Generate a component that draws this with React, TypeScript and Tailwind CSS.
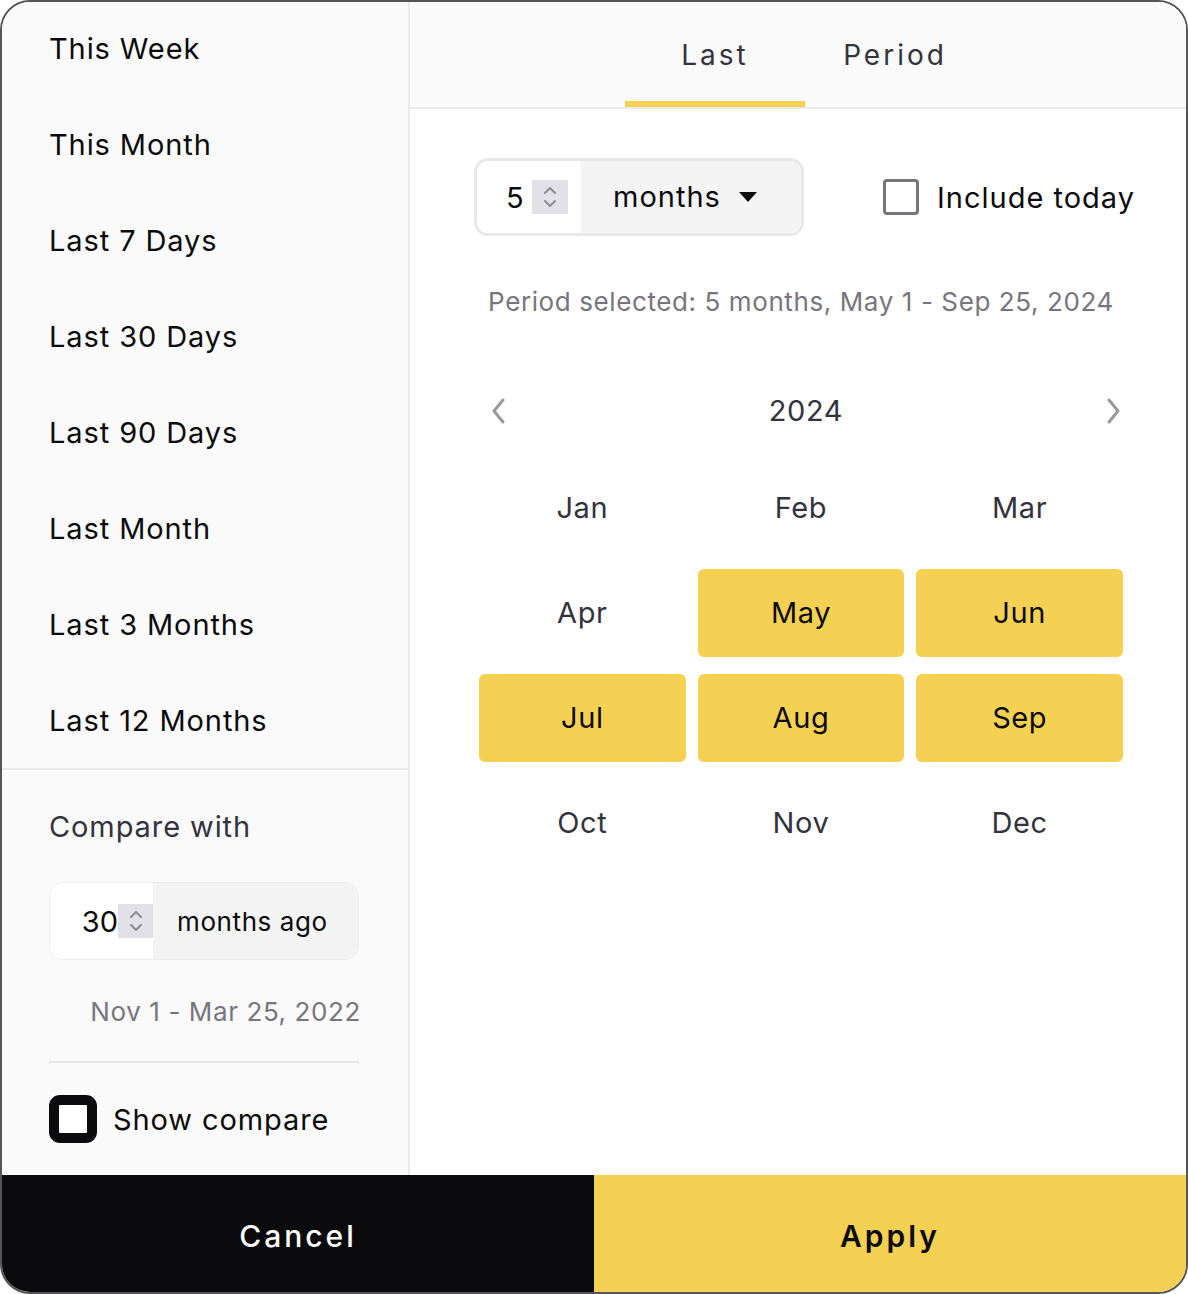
import { useState } from 'react';

const presets = [
  'This Week',
  'This Month',
  'Last 7 Days',
  'Last 30 Days',
  'Last 90 Days',
  'Last Month',
  'Last 3 Months',
  'Last 12 Months',
];

const months = ['Jan', 'Feb', 'Mar', 'Apr', 'May', 'Jun', 'Jul', 'Aug', 'Sep', 'Oct', 'Nov', 'Dec'];
const selected = ['May', 'Jun', 'Jul', 'Aug', 'Sep'];

const Spinner = ({ className }: { className: string }) => (
  <div className={`flex items-center justify-center bg-[#e2e1e8] ${className}`}>
    <svg width="16" height="26" viewBox="0 0 16 26" fill="none" stroke="#8c8a93" strokeWidth="2" strokeLinecap="round" strokeLinejoin="round">
      <path d="M3 9l5-5 5 5" />
      <path d="M3 17l5 5 5-5" />
    </svg>
  </div>
);

const App = () => {
  const [tab, setTab] = useState<'last' | 'period'>('last');
  const [includeToday, setIncludeToday] = useState(false);
  const [showCompare, setShowCompare] = useState(false);

  return (
    <div className="w-[1188px] h-[1294px] bg-white font-['Inter',sans-serif] text-[#0b0b0d]">
      <div className="w-full h-full border-2 border-[#555555] rounded-[30px] overflow-hidden flex flex-col">
        <div className="flex flex-1 min-h-0">
          {/* Sidebar */}
          <aside className="w-[408px] shrink-0 bg-[#fafafa] border-r-2 border-[#ebebeb] flex flex-col">
            <ul className="-mt-[2px]">
              {presets.map((p) => (
                <li key={p} className="h-[96px] flex items-center px-[47px] text-[29px] tracking-[0.9px] leading-none">
                  {p}
                </li>
              ))}
            </ul>
            <div className="border-t-2 border-[#ebebeb] px-[47px] pt-[40px]">
              <div className="text-[29px] tracking-[0.9px] leading-[34px] text-[#33333d]">Compare with</div>
              <div className="mt-[38px] h-[78px] w-[310px] flex rounded-[14px] border border-[#ededed] overflow-hidden">
                <div className="w-[103px] bg-white flex items-center justify-end">
                  <span className="text-[29px] leading-none">30</span>
                  <Spinner className="w-[35px] h-[34px]" />
                </div>
                <div className="flex-1 bg-[#f3f3f4] flex items-center pl-[24px] text-[26px] tracking-[0.6px]">months ago</div>
              </div>
              <div className="mt-[36px] text-right text-[26px] tracking-[0.6px] leading-[32px] text-[#77757d]">Nov 1 - Mar 25, 2022</div>
              <div className="mt-[33px] h-[2px] w-[310px] bg-[#e6e6e6]" />
              <label className="mt-[32px] flex items-center gap-[16px] cursor-pointer">
                <button
                  onClick={() => setShowCompare((v) => !v)}
                  className="w-[48px] h-[48px] rounded-[11px] border-[10px] border-[#0b0b0d] bg-white"
                />
                <span className="text-[29px] tracking-[0.9px] leading-none">Show compare</span>
              </label>
            </div>
          </aside>

          {/* Main */}
          <main className="flex-1 flex flex-col bg-white">
            <div className="h-[107px] bg-[#fafafa] border-b-2 border-[#ebebeb] flex justify-center pl-[14px]">
              {(['last', 'period'] as const).map((t) => (
                <button
                  key={t}
                  onClick={() => setTab(t)}
                  className={`w-[180px] h-full flex items-center justify-center text-[28px] tracking-[3px] text-[#33333d] border-b-[6px] ${
                    tab === t ? 'border-[#f5d153]' : 'border-transparent'
                  }`}
                >
                  <span className="mt-[6px]">{t === 'last' ? 'Last' : 'Period'}</span>
                </button>
              ))}
            </div>

            <div className="pt-[49px] pl-[64px] pr-[51px] flex items-center justify-between">
              <div className="h-[78px] w-[330px] flex rounded-[14px] border-[3px] border-[#e8e8e8] overflow-hidden">
                <div className="w-[104px] bg-white flex items-center pl-[29px] gap-[8px]">
                  <span className="text-[29px] leading-none">5</span>
                  <Spinner className="w-[36px] h-[34px]" />
                </div>
                <div className="flex-1 bg-[#f4f4f5] flex items-center pl-[32px] gap-[18px] text-[29px] tracking-[1px]">
                  months
                  <svg width="18" height="10" viewBox="0 0 18 10">
                    <path d="M0 0h18L9 10z" fill="#0b0b0d" />
                  </svg>
                </div>
              </div>
              <label className="flex items-center gap-[18px] cursor-pointer">
                <button
                  onClick={() => setIncludeToday((v) => !v)}
                  className={`w-[36px] h-[36px] rounded-[4px] border-[3px] border-[#77757e] ${includeToday ? 'bg-[#f5d153]' : 'bg-white'}`}
                />
                <span className="text-[29px] tracking-[1px] leading-none">Include today</span>
              </label>
            </div>

            <div className="mt-[50px] pl-[69px] pr-[63px] text-center text-[26px] tracking-[0.6px] leading-[32px] text-[#77757d]">
              Period selected: 5 months, May 1 - Sep 25, 2024
            </div>

            <div className="mt-[73px] pl-[78px] pr-[62px] flex items-center justify-between h-[40px]">
              <svg width="20" height="28" viewBox="0 0 20 28" fill="none" stroke="#9a9a9a" strokeWidth="3" strokeLinecap="round" strokeLinejoin="round">
                <path d="M15 3L6 14l9 11" />
              </svg>
              <span className="text-[29px] tracking-[0.6px] text-[#33333d]">2024</span>
              <svg width="20" height="28" viewBox="0 0 20 28" fill="none" stroke="#9a9a9a" strokeWidth="3" strokeLinecap="round" strokeLinejoin="round">
                <path d="M5 3l9 11L5 25" />
              </svg>
            </div>

            <div className="mt-[33px] ml-[69px] mr-[63px] grid grid-cols-3 gap-x-[12px] gap-y-[17px]">
              {months.map((m) => {
                const on = selected.includes(m);
                return (
                  <div
                    key={m}
                    className={`h-[88px] rounded-[6px] flex items-center justify-center text-[29px] tracking-[0.6px] ${
                      on ? 'bg-[#f5d153] text-[#0b0b0d]' : 'text-[#33333d]'
                    }`}
                  >
                    {m}
                  </div>
                );
              })}
            </div>
          </main>
        </div>

        {/* Footer */}
        <div className="h-[117px] shrink-0 flex">
          <button className="w-[592px] pt-[5px] bg-[#0b0b0d] text-white text-[30px] font-medium tracking-[3px]">Cancel</button>
          <button className="flex-1 pt-[5px] bg-[#f5d153] text-[#0b0b0d] text-[30px] font-semibold tracking-[3px]">Apply</button>
        </div>
      </div>
    </div>
  );
};

export default App;
